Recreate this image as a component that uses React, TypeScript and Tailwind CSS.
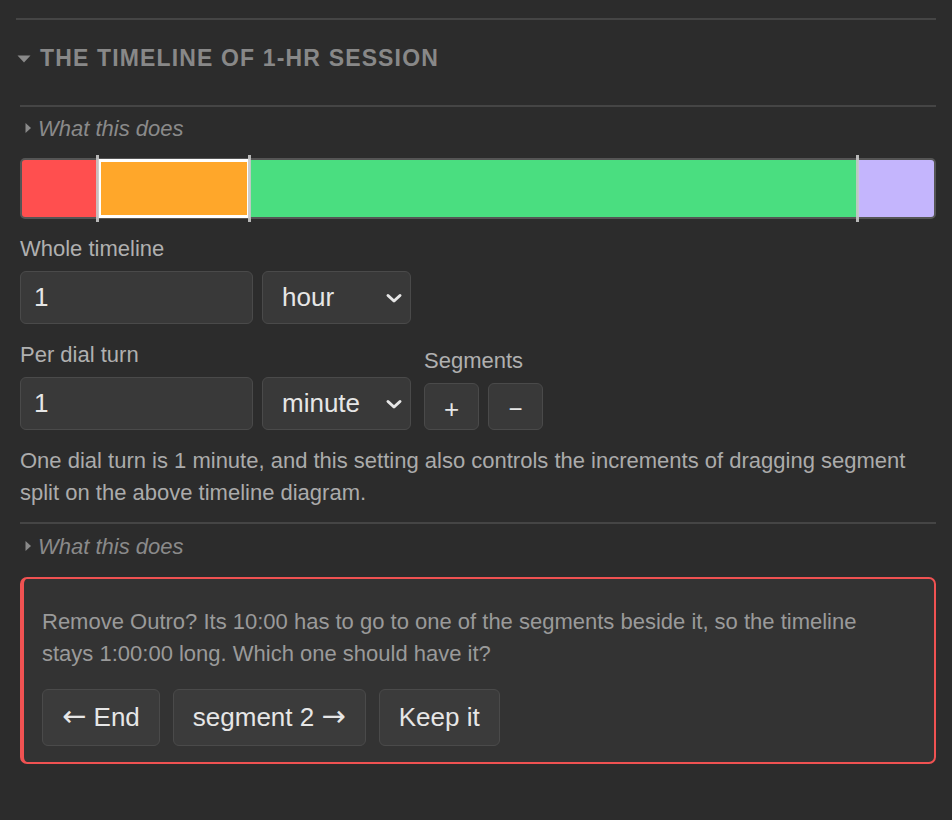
import React from "react";

const font = { fontFamily: '"Liberation Sans", Arial, sans-serif' };

type Seg = { name: string; minutes: number; color: string };

const segments: Seg[] = [
  { name: "Intro", minutes: 5, color: "#ff4f4f" },
  { name: "segment 1", minutes: 10, color: "#ffa72a" },
  { name: "segment 2", minutes: 40, color: "#4ade80" },
  { name: "Outro", minutes: 5, color: "#c4b5fd" },
];

function Chevron() {
  return (
    <svg
      className="pointer-events-none absolute right-[8px] top-1/2 -translate-y-1/2"
      width="18"
      height="12"
      viewBox="0 0 18 12"
      fill="none"
    >
      <path d="M3 3.5 L9 9 L15 3.5" stroke="#e6e6e6" strokeWidth="3" strokeLinecap="round" strokeLinejoin="round" />
    </svg>
  );
}

function Disclosure() {
  return (
    <div className="flex items-center h-[26px] text-[22px] italic text-[#8a8a8a]">
      <svg width="8" height="12" viewBox="0 0 8 12" className="ml-[4px] mr-[6px]">
        <path d="M1.5 1 L7 6 L1.5 11 Z" fill="#8a8a8a" />
      </svg>
      <span>What this does</span>
    </div>
  );
}

function Arrow({ dir }: { dir: "left" | "right" }) {
  return (
    <span
      className="inline-block text-[29px] leading-none"
      style={{ fontFamily: '"DejaVu Sans", sans-serif' }}
    >
      {dir === "left" ? "←" : "→"}
    </span>
  );
}

function Timeline() {
  const total = segments.reduce((s, x) => s + x.minutes, 0);
  return (
    <div className="relative h-[61px] rounded-[5px] border-2 border-[#555555] bg-[#555555] flex">
      {segments.map((s, i) => (
        <div
          key={s.name}
          className={
            "relative h-full " +
            (i === 0 ? "rounded-l-[3px] " : "") +
            (i === segments.length - 1 ? "rounded-r-[3px] " : "")
          }
          style={{ width: `${(s.minutes / total) * 100}%`, background: s.color }}
        >
          {i === 1 && (
            <div className="absolute inset-x-0 -top-[1px] -bottom-[1px] border-[3px] border-white" />
          )}
          {i > 0 && (
            <div className="absolute left-[-2px] top-[-5px] bottom-[-5px] w-[3px] bg-[#c8c8c8] opacity-90" />
          )}
        </div>
      ))}
    </div>
  );
}

const inputCls =
  "h-[53px] rounded-[6px] border border-[#4a4a4a] bg-[#393939] text-[26px] text-[#e6e6e6] outline-none";

const btnCls =
  "h-[57px] rounded-[6px] border border-[#4a4a4a] bg-[#3b3b3b] px-[19px] text-[26px] text-[#e6e6e6]";

export default function App() {
  return (
    <div className="min-h-[820px] w-full bg-[#2c2c2c] pt-[18px] pb-[40px]" style={font}>
      {/* Section header */}
      <div className="ml-4 mr-4 border-t-2 border-[#454545]">
        <div className="flex h-[85px] items-center pb-[8px]">
          <svg width="14" height="8" viewBox="0 0 14 8" className="ml-[1px] mr-[9px]">
            <path d="M0.5 0.5 L13.5 0.5 L7 7.5 Z" fill="#8a8a8a" />
          </svg>
          <h2 className="text-[23px] font-bold uppercase tracking-[0.05em] text-[#888888]">
            The timeline of 1-hr session
          </h2>
        </div>
      </div>

      <div className="ml-5 mr-4 border-t-2 border-[#454545] pt-[8px]">
        <Disclosure />

        <div className="mt-[17px]">
          <Timeline />
        </div>

        <div className="mt-[17px] text-[22px] leading-[26px] text-[#b0b0b0]">Whole timeline</div>
        <div className="mt-[9px] flex gap-[9px]">
          <input className={inputCls + " w-[233px] px-[13px]"} defaultValue="1" />
          <div className="relative w-[149px]">
            <select className={inputCls + " w-full appearance-none pl-[19px]"} defaultValue="hour">
              <option value="minute">minute</option>
              <option value="hour">hour</option>
            </select>
            <Chevron />
          </div>
        </div>

        <div className="mt-[18px] flex items-end gap-[13px]">
          <div>
            <div className="text-[22px] leading-[26px] text-[#b0b0b0]">Per dial turn</div>
            <div className="mt-[9px] flex gap-[9px]">
              <input className={inputCls + " w-[233px] px-[13px]"} defaultValue="1" />
              <div className="relative w-[149px]">
                <select className={inputCls + " w-full appearance-none pl-[19px]"} defaultValue="minute">
                  <option value="minute">minute</option>
                  <option value="hour">hour</option>
                </select>
                <Chevron />
              </div>
            </div>
          </div>
          <div>
            <div className="text-[22px] leading-[26px] text-[#b0b0b0]">Segments</div>
            <div className="mt-[9px] flex gap-[9px]">
              <button className="h-[47px] w-[55px] rounded-[6px] border border-[#4a4a4a] bg-[#393939] pt-[6px] text-[26px] text-[#e6e6e6]">
                +
              </button>
              <button className="h-[47px] w-[55px] rounded-[6px] border border-[#4a4a4a] bg-[#393939] pt-[4px] text-[24px] text-[#e6e6e6]">
                −
              </button>
            </div>
          </div>
        </div>

        <p className="mt-[15px] pb-[13px] text-[22px] leading-[32px] text-[#ababab]">
          One dial turn is 1 minute, and this setting also controls the increments of dragging segment split on
          the above timeline diagram.
        </p>

        <div className="border-t-2 border-[#454545] pt-[9px]">
          <Disclosure />
        </div>

        <div className="mt-[18px] rounded-[7px] border-2 border-l-4 border-[#f05252] bg-[#333333] pb-[16px] pl-[18px] pr-[28px] pt-[27px]">
          <p className="text-[22px] leading-[32px] text-[#9a9a9a]">
            Remove Outro? Its 10:00 has to go to one of the segments beside it, so the timeline stays 1:00:00 long.
            Which one should have it?
          </p>
          <div className="mt-[19px] flex gap-[13px]">
            <button className={btnCls}>
              <Arrow dir="left" /> End
            </button>
            <button className={btnCls}>
              segment 2 <Arrow dir="right" />
            </button>
            <button className={btnCls}>Keep it</button>
          </div>
        </div>
      </div>
    </div>
  );
}
